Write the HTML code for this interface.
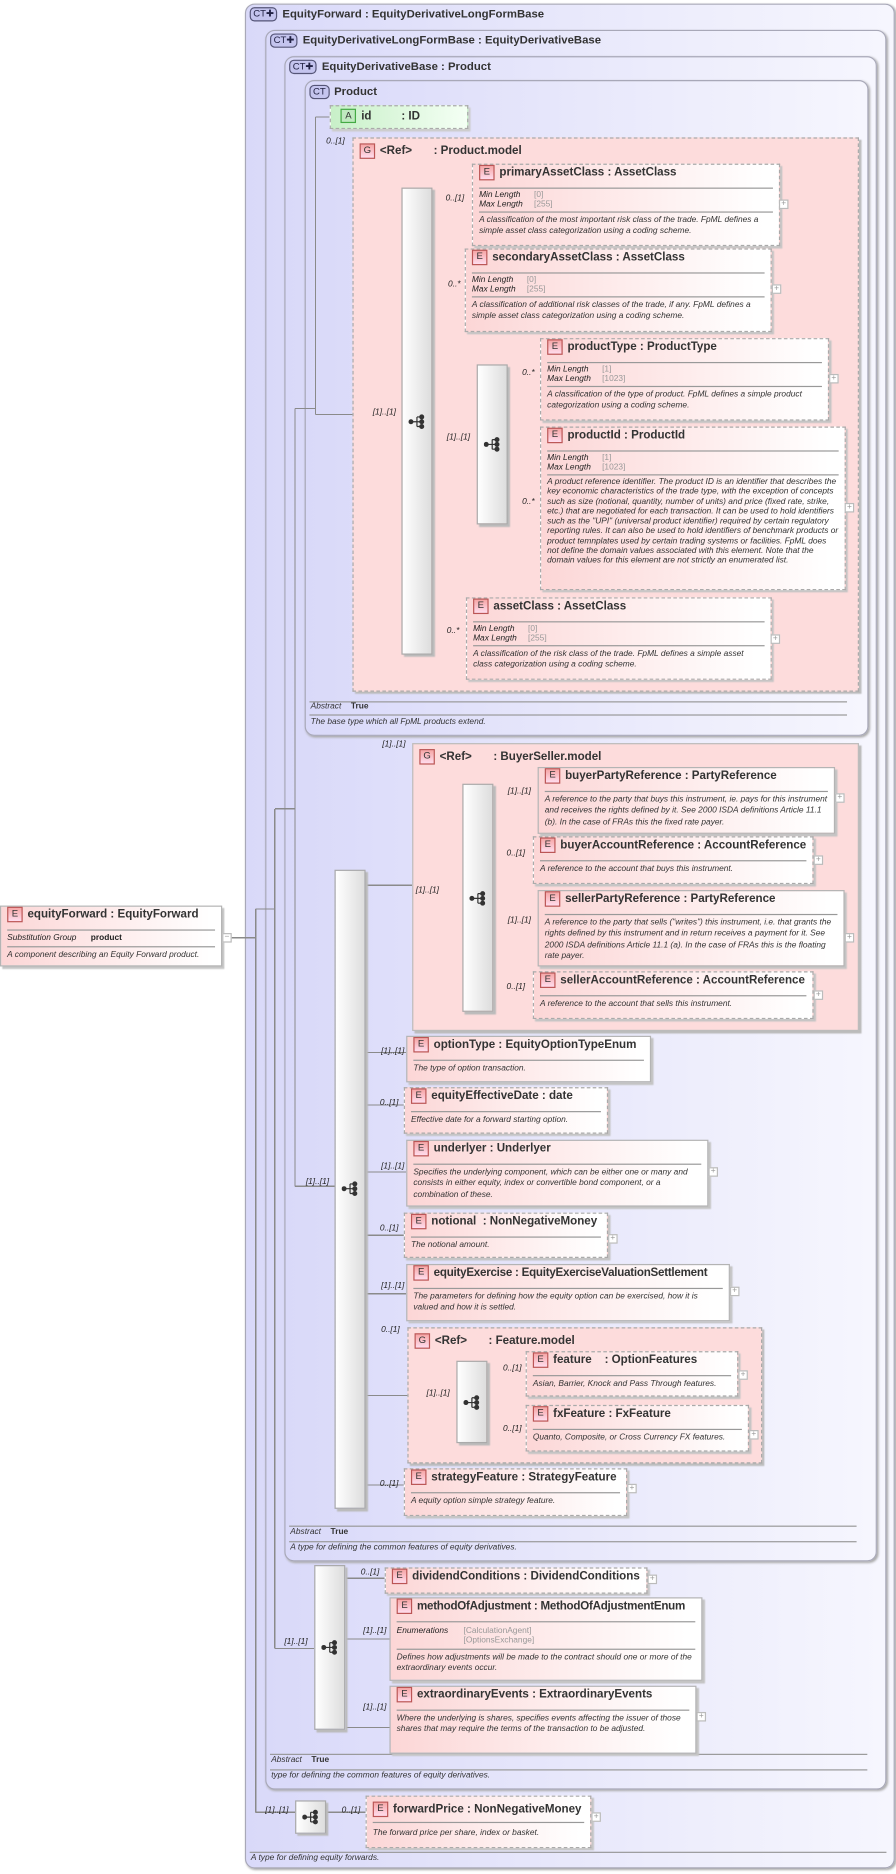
<!DOCTYPE html>
<html><head><meta charset="utf-8">
<style>
html,body{margin:0;padding:0;background:#fff;}
body{width:896px;height:1874px;overflow:hidden;position:relative;}
#s{position:absolute;left:0;top:0;width:750px;height:1569px;transform:scale(1.19467);transform-origin:0 0;font-family:"Liberation Sans",sans-serif;color:#333;}
.ct{position:absolute;box-sizing:border-box;border:1px solid #a8a8b8;border-radius:8px;background:linear-gradient(to right,#d9d9f9,#eeeefc 70%,#f6f6fe);box-shadow:1px 1px 2px #aaa;}
.cth{position:absolute;font:bold 9.5px "Liberation Sans",sans-serif;color:#333;white-space:nowrap;}
.ctb{display:inline-block;border:1px solid #557;border-radius:4px;background:#c4c4ee;font:normal 8px "Liberation Sans",sans-serif;padding:0 2px;height:10px;line-height:10px;margin-right:4px;vertical-align:middle;color:#224}
.el{position:absolute;box-sizing:border-box;border:1px solid #b4b4b4;background:linear-gradient(to right,#fcd6d6,#fff 95%);box-shadow:2px 2px 1px #c4c4c4;padding:0 5px;}
.d{border-style:dashed;border-color:#aaa;}
.hd{height:19px;line-height:19px;font:bold 9.7px "Liberation Sans",sans-serif;color:#333;white-space:nowrap;}
.E{display:inline-block;width:11px;height:11px;line-height:11px;border:1px solid #b55;background:linear-gradient(#f6a6a6,#fde);font:normal 8px "Liberation Sans",sans-serif;text-align:center;margin-right:4px;vertical-align:middle;color:#333}
.hr{border-top:1px solid #999;}
.fc{font:italic 7px "Liberation Sans",sans-serif;line-height:8px;padding:2px 0 1px;color:#222;white-space:nowrap}
.fc span{display:inline-block;width:46px}
.fc i{font-style:normal;color:#999}
.ds{font:italic 7px "Liberation Sans",sans-serif;line-height:9.4px;padding:2px 0;color:#333}
.grp{position:absolute;box-sizing:border-box;border:1px dashed #aaa;background:#fddcdc;box-shadow:2px 2px 1px #bbb;}
.gh{position:absolute;left:5px;top:4px;font:bold 9.7px "Liberation Sans",sans-serif;white-space:nowrap}
.seq{position:absolute;box-sizing:border-box;border:1px solid #aaa;background:linear-gradient(to right,#fff,#ddd);box-shadow:2px 2px 1px #bbb;}
.seq svg{position:absolute;left:50%;top:50%;margin-left:-7px;margin-top:-7px}
.lb{position:absolute;font:italic 7px "Liberation Sans",sans-serif;color:#222;white-space:nowrap}
.pl{position:absolute;width:6px;height:6px;border:1px solid #bbb;background:#fff;font:7px/6px "Liberation Sans",sans-serif;color:#999;text-align:center}
.ab{position:absolute;font:italic 7px "Liberation Sans",sans-serif;white-space:nowrap}
.ab b{font-style:normal;margin-left:8px}
.hl{position:absolute;border-top:1px solid #999;height:0}
</style></head><body><div id="s">

<div class="ct" style="left:205px;top:3px;width:544px;height:1561px"></div>
<div class="cth" style="left:209px;top:6px"><span class="ctb">CT✚</span>EquityForward : EquityDerivativeLongFormBase</div>
<div class="ct" style="left:222px;top:25px;width:520px;height:1473px"></div>
<div class="cth" style="left:226px;top:28px"><span class="ctb">CT✚</span>EquityDerivativeLongFormBase : EquityDerivativeBase</div>
<div class="ct" style="left:238px;top:47px;width:496px;height:1260px"></div>
<div class="cth" style="left:242px;top:50px"><span class="ctb">CT✚</span>EquityDerivativeBase : Product</div>
<div class="ct" style="left:255px;top:67px;width:472px;height:549px"></div>
<div class="cth" style="left:259px;top:71px"><span class="ctb">CT</span>Product</div>

<div class="hl" style="left:259px;top:587px;width:450px"></div>
<div class="ab" style="left:260px;top:588px">Abstract<b>True</b></div>
<div class="hl" style="left:259px;top:598px;width:450px"></div>
<div class="ab" style="left:260px;top:601px">The base type which all FpML products extend.</div>

<div class="hl" style="left:242px;top:1277px;width:475px"></div>
<div class="ab" style="left:243px;top:1279px">Abstract<b>True</b></div>
<div class="hl" style="left:242px;top:1290px;width:475px"></div>
<div class="ab" style="left:243px;top:1292px">A type for defining the common features of equity derivatives.</div>

<div class="hl" style="left:226px;top:1468px;width:500px"></div>
<div class="ab" style="left:227px;top:1470px">Abstract<b>True</b></div>
<div class="hl" style="left:226px;top:1481px;width:500px"></div>
<div class="ab" style="left:227px;top:1483px">type for defining the common features of equity derivatives.</div>

<div class="hl" style="left:209px;top:1550px;width:533px"></div>
<div class="ab" style="left:210px;top:1552px">A type for defining equity forwards.</div>

<svg style="position:absolute;left:0;top:0" width="750" height="1569"><g stroke="#8a8a8a" stroke-width="1" fill="none" shape-rendering="crispEdges">
<path d="M192 785H214M214 761V1517M214 761H230M230 677V1380M230 677H247M247 342V993M247 342H264M264 98V347M264 98H276M264 347H336"/>
<path d="M361 170H395M361 241H389M361 372H399M361 534H390M424 316H452M424 424H452"/>
<path d="M306 741H345M345 750H387M412 666H450M412 716H446M412 776H450M412 829H446"/>
<path d="M247 993H280M306 881H340M306 925H338M306 981H340M306 1034H338M306 1083H340M306 1168H341M306 1243H338"/>
<path d="M341 1175H382M407 1150H440M407 1200H440"/>
<path d="M230 1380H263M289 1321H322M289 1372H326M289 1446H326"/>
<path d="M214 1517H247M272 1517H306"/>
</g></svg>

<div class="el" style="left:0;top:758px;width:186px;height:51px">
<div class="hd"><span class="E">E</span>equityForward : EquityForward</div><div class="hr"></div>
<div class="fc" style="padding:3px 0 2px"><span style="width:70px">Substitution Group</span><b style="font-style:normal">product</b></div><div class="hr"></div>
<div class="ds">A component describing an Equity Forward product.</div></div>
<div class="pl" style="left:186px;top:781px">−</div>

<div style="position:absolute;left:276px;top:88px;width:116px;height:20px;box-sizing:border-box;border:1px dashed #aaa;background:linear-gradient(to right,#c8f0c8,#f4fff4);box-shadow:2px 2px 1px #ccc;font:bold 9.7px 'Liberation Sans',sans-serif;line-height:18px;padding-left:8px">
<span style="display:inline-block;border:1px solid #4a4;background:#bfe9bf;font:normal 8px 'Liberation Sans';padding:0 3px;line-height:10px;vertical-align:middle;margin-right:4px">A</span>id<span style="margin-left:25px">: ID</span></div>

<div class="lb" style="left:273px;top:115px">0..[1]</div>
<div class="grp" style="left:295px;top:115px;width:424px;height:464px"><div class="gh"><span class="E">G</span>&lt;Ref&gt;<span style="margin-left:18px">: Product.model</span></div></div>
<div class="seq" style="left:336px;top:157px;width:26px;height:391px"><svg width="14" height="14"><g fill="#333" stroke="#333"><circle cx="2" cy="7" r="1.6"/><path d="M2 7H7M7 3V11M7 3H11M7 7H11M7 11H11" fill="none"/><circle cx="11" cy="3" r="1.6"/><circle cx="11" cy="7" r="1.6"/><circle cx="11" cy="11" r="1.6"/></g></svg></div>
<div class="lb" style="left:312px;top:342px">[1]..[1]</div>

<div class="lb" style="left:373px;top:163px">0..[1]</div>
<div class="el d" style="left:395px;top:137px;width:258px;height:69px"><div class="hd"><span class="E">E</span>primaryAssetClass : AssetClass</div><div class="hr"></div>
<div class="fc"><span>Min Length</span><i>[0]</i><br><span>Max Length</span><i>[255]</i></div><div class="hr"></div>
<div class="ds">A classification of the most important risk class of the trade. FpML defines a simple asset class categorization using a coding scheme.</div></div>
<div class="pl" style="left:652px;top:167px">+</div>

<div class="lb" style="left:375px;top:235px">0..*</div>
<div class="el d" style="left:389px;top:208px;width:257px;height:70px"><div class="hd"><span class="E">E</span>secondaryAssetClass : AssetClass</div><div class="hr"></div>
<div class="fc"><span>Min Length</span><i>[0]</i><br><span>Max Length</span><i>[255]</i></div><div class="hr"></div>
<div class="ds">A classification of additional risk classes of the trade, if any. FpML defines a simple asset class categorization using a coding scheme.</div></div>
<div class="pl" style="left:646px;top:238px">+</div>

<div class="seq" style="left:399px;top:305px;width:26px;height:134px"><svg width="14" height="14"><g fill="#333" stroke="#333"><circle cx="2" cy="7" r="1.6"/><path d="M2 7H7M7 3V11M7 3H11M7 7H11M7 11H11" fill="none"/><circle cx="11" cy="3" r="1.6"/><circle cx="11" cy="7" r="1.6"/><circle cx="11" cy="11" r="1.6"/></g></svg></div>
<div class="lb" style="left:374px;top:363px">[1]..[1]</div>

<div class="lb" style="left:437px;top:309px">0..*</div>
<div class="el d" style="left:452px;top:283px;width:242px;height:69px"><div class="hd"><span class="E">E</span>productType : ProductType</div><div class="hr"></div>
<div class="fc"><span>Min Length</span><i>[1]</i><br><span>Max Length</span><i>[1023]</i></div><div class="hr"></div>
<div class="ds">A classification of the type of product. FpML defines a simple product categorization using a coding scheme.</div></div>
<div class="pl" style="left:694px;top:313px">+</div>

<div class="lb" style="left:437px;top:417px">0..*</div>
<div class="el d" style="left:452px;top:357px;width:256px;height:137px"><div class="hd"><span class="E">E</span>productId : ProductId</div><div class="hr"></div>
<div class="fc"><span>Min Length</span><i>[1]</i><br><span>Max Length</span><i>[1023]</i></div><div class="hr"></div>
<div class="ds" style="line-height:8.3px">A product reference identifier. The product ID is an identifier that describes the key economic characteristics of the trade type, with the exception of concepts such as size (notional, quantity, number of units) and price (fixed rate, strike, etc.) that are negotiated for each transaction. It can be used to hold identifiers such as the "UPI" (universal product identifier) required by certain regulatory reporting rules. It can also be used to hold identifiers of benchmark products or product temnplates used by certain trading systems or facilities. FpML does not define the domain values associated with this element. Note that the domain values for this element are not strictly an enumerated list.</div></div>
<div class="pl" style="left:707px;top:421px">+</div>

<div class="lb" style="left:374px;top:525px">0..*</div>
<div class="el d" style="left:390px;top:500px;width:256px;height:69px"><div class="hd"><span class="E">E</span>assetClass : AssetClass</div><div class="hr"></div>
<div class="fc"><span>Min Length</span><i>[0]</i><br><span>Max Length</span><i>[255]</i></div><div class="hr"></div>
<div class="ds">A classification of the risk class of the trade. FpML defines a simple asset class categorization using a coding scheme.</div></div>
<div class="pl" style="left:645px;top:531px">+</div>

<div class="lb" style="left:320px;top:620px">[1]..[1]</div>
<div class="grp" style="left:345px;top:622px;width:374px;height:241px;border-style:solid;border-color:#bbb"><div class="gh"><span class="E">G</span>&lt;Ref&gt;<span style="margin-left:18px">: BuyerSeller.model</span></div></div>
<div class="seq" style="left:387px;top:656px;width:26px;height:191px"><svg width="14" height="14"><g fill="#333" stroke="#333"><circle cx="2" cy="7" r="1.6"/><path d="M2 7H7M7 3V11M7 3H11M7 7H11M7 11H11" fill="none"/><circle cx="11" cy="3" r="1.6"/><circle cx="11" cy="7" r="1.6"/><circle cx="11" cy="11" r="1.6"/></g></svg></div>
<div class="lb" style="left:348px;top:742px">[1]..[1]</div>

<div class="lb" style="left:425px;top:659px">[1]..[1]</div>
<div class="el" style="left:450px;top:642px;width:249px;height:56px"><div class="hd"><span class="E">E</span>buyerPartyReference : PartyReference</div><div class="hr"></div>
<div class="ds">A reference to the party that buys this instrument, ie. pays for this instrument and receives the rights defined by it. See 2000 ISDA definitions Article 11.1 (b). In the case of FRAs this the fixed rate payer.</div></div>
<div class="pl" style="left:699px;top:664px">+</div>

<div class="lb" style="left:424px;top:711px">0..[1]</div>
<div class="el d" style="left:446px;top:700px;width:235px;height:40px"><div class="hd"><span class="E">E</span>buyerAccountReference : AccountReference</div><div class="hr"></div>
<div class="ds">A reference to the account that buys this instrument.</div></div>
<div class="pl" style="left:681px;top:716px">+</div>

<div class="lb" style="left:425px;top:767px">[1]..[1]</div>
<div class="el" style="left:450px;top:745px;width:257px;height:64px"><div class="hd"><span class="E">E</span>sellerPartyReference : PartyReference</div><div class="hr"></div>
<div class="ds">A reference to the party that sells ("writes") this instrument, i.e. that grants the rights defined by this instrument and in return receives a payment for it. See 2000 ISDA definitions Article 11.1 (a). In the case of FRAs this is the floating rate payer.</div></div>
<div class="pl" style="left:707px;top:781px">+</div>

<div class="lb" style="left:424px;top:823px">0..[1]</div>
<div class="el d" style="left:446px;top:813px;width:235px;height:40px"><div class="hd"><span class="E">E</span>sellerAccountReference : AccountReference</div><div class="hr"></div>
<div class="ds">A reference to the account that sells this instrument.</div></div>
<div class="pl" style="left:681px;top:829px">+</div>

<div class="seq" style="left:280px;top:728px;width:26px;height:535px"><svg width="14" height="14" style="top:266px"><g fill="#333" stroke="#333"><circle cx="2" cy="7" r="1.6"/><path d="M2 7H7M7 3V11M7 3H11M7 7H11M7 11H11" fill="none"/><circle cx="11" cy="3" r="1.6"/><circle cx="11" cy="7" r="1.6"/><circle cx="11" cy="11" r="1.6"/></g></svg></div>
<div class="lb" style="left:256px;top:986px">[1]..[1]</div>

<div class="lb" style="left:319px;top:877px">[1]..[1]</div>
<div class="el" style="left:340px;top:867px;width:205px;height:39px"><div class="hd"><span class="E">E</span>optionType : EquityOptionTypeEnum</div><div class="hr"></div>
<div class="ds">The type of option transaction.</div></div>

<div class="lb" style="left:318px;top:920px">0..[1]</div>
<div class="el d" style="left:338px;top:910px;width:171px;height:39px"><div class="hd"><span class="E">E</span>equityEffectiveDate : date</div><div class="hr"></div>
<div class="ds">Effective date for a forward starting option.</div></div>

<div class="lb" style="left:319px;top:973px">[1]..[1]</div>
<div class="el" style="left:340px;top:954px;width:253px;height:56px"><div class="hd"><span class="E">E</span>underlyer : Underlyer</div><div class="hr"></div>
<div class="ds">Specifies the underlying component, which can be either one or many and consists in either equity, index or convertible bond component, or a combination of these.</div></div>
<div class="pl" style="left:593px;top:977px">+</div>

<div class="lb" style="left:318px;top:1025px">0..[1]</div>
<div class="el d" style="left:338px;top:1015px;width:171px;height:38px"><div class="hd"><span class="E">E</span>notional&nbsp; : NonNegativeMoney</div><div class="hr"></div>
<div class="ds">The notional amount.</div></div>
<div class="pl" style="left:509px;top:1033px">+</div>

<div class="lb" style="left:319px;top:1073px">[1]..[1]</div>
<div class="el" style="left:340px;top:1058px;width:271px;height:48px"><div class="hd" style="letter-spacing:-0.2px"><span class="E">E</span>equityExercise : EquityExerciseValuationSettlement</div><div class="hr"></div>
<div class="ds">The parameters for defining how the equity option can be exercised, how it is valued and how it is settled.</div></div>
<div class="pl" style="left:611px;top:1077px">+</div>

<div class="lb" style="left:319px;top:1110px">0..[1]</div>
<div class="grp" style="left:341px;top:1111px;width:297px;height:114px"><div class="gh"><span class="E">G</span>&lt;Ref&gt;<span style="margin-left:18px">: Feature.model</span></div></div>
<div class="seq" style="left:382px;top:1139px;width:26px;height:69px"><svg width="14" height="14"><g fill="#333" stroke="#333"><circle cx="2" cy="7" r="1.6"/><path d="M2 7H7M7 3V11M7 3H11M7 7H11M7 11H11" fill="none"/><circle cx="11" cy="3" r="1.6"/><circle cx="11" cy="7" r="1.6"/><circle cx="11" cy="11" r="1.6"/></g></svg></div>
<div class="lb" style="left:357px;top:1163px">[1]..[1]</div>

<div class="lb" style="left:421px;top:1142px">0..[1]</div>
<div class="el d" style="left:440px;top:1131px;width:178px;height:38px"><div class="hd"><span class="E">E</span>feature&nbsp;&nbsp;&nbsp; : OptionFeatures</div><div class="hr"></div>
<div class="ds">Asian, Barrier, Knock and Pass Through features.</div></div>
<div class="pl" style="left:618px;top:1147px">+</div>

<div class="lb" style="left:421px;top:1193px">0..[1]</div>
<div class="el d" style="left:440px;top:1176px;width:187px;height:39px"><div class="hd"><span class="E">E</span>fxFeature : FxFeature</div><div class="hr"></div>
<div class="ds">Quanto, Composite, or Cross Currency FX features.</div></div>
<div class="pl" style="left:627px;top:1197px">+</div>

<div class="lb" style="left:318px;top:1239px">0..[1]</div>
<div class="el d" style="left:338px;top:1229px;width:187px;height:40px"><div class="hd"><span class="E">E</span>strategyFeature : StrategyFeature</div><div class="hr"></div>
<div class="ds">A equity option simple strategy feature.</div></div>
<div class="pl" style="left:525px;top:1242px">+</div>

<div class="seq" style="left:263px;top:1310px;width:26px;height:138px"><svg width="14" height="14"><g fill="#333" stroke="#333"><circle cx="2" cy="7" r="1.6"/><path d="M2 7H7M7 3V11M7 3H11M7 7H11M7 11H11" fill="none"/><circle cx="11" cy="3" r="1.6"/><circle cx="11" cy="7" r="1.6"/><circle cx="11" cy="11" r="1.6"/></g></svg></div>
<div class="lb" style="left:238px;top:1371px">[1]..[1]</div>

<div class="lb" style="left:302px;top:1313px">0..[1]</div>
<div class="el d" style="left:322px;top:1312px;width:220px;height:22px"><div class="hd"><span class="E">E</span>dividendConditions : DividendConditions</div></div>
<div class="pl" style="left:542px;top:1318px">+</div>

<div class="lb" style="left:304px;top:1362px">[1]..[1]</div>
<div class="el" style="left:326px;top:1337px;width:262px;height:70px"><div class="hd" style="letter-spacing:-0.2px"><span class="E">E</span>methodOfAdjustment : MethodOfAdjustmentEnum</div><div class="hr"></div>
<div class="fc" style="padding:4px 0 2px"><span style="width:56px">Enumerations</span><i>[CalculationAgent]</i><br><span style="width:56px"></span><i>[OptionsExchange]</i></div><div class="hr"></div>
<div class="ds">Defines how adjustments will be made to the contract should one or more of the extraordinary events occur.</div></div>

<div class="lb" style="left:304px;top:1426px">[1]..[1]</div>
<div class="el" style="left:326px;top:1411px;width:257px;height:57px"><div class="hd"><span class="E">E</span>extraordinaryEvents : ExtraordinaryEvents</div><div class="hr"></div>
<div class="ds">Where the underlying is shares, specifies events affecting the issuer of those shares that may require the terms of the transaction to be adjusted.</div></div>
<div class="pl" style="left:583px;top:1433px">+</div>

<div class="seq" style="left:247px;top:1507px;width:26px;height:28px"><svg width="14" height="14"><g fill="#333" stroke="#333"><circle cx="2" cy="7" r="1.6"/><path d="M2 7H7M7 3V11M7 3H11M7 7H11M7 11H11" fill="none"/><circle cx="11" cy="3" r="1.6"/><circle cx="11" cy="7" r="1.6"/><circle cx="11" cy="11" r="1.6"/></g></svg></div>
<div class="lb" style="left:222px;top:1512px">[1]..[1]</div>
<div class="lb" style="left:286px;top:1512px">0..[1]</div>
<div class="el d" style="left:306px;top:1503px;width:189px;height:44px"><div class="hd" style="height:21px;line-height:21px"><span class="E">E</span>forwardPrice : NonNegativeMoney</div><div class="hr"></div>
<div class="ds" style="padding-top:4px">The forward price per share, index or basket.</div></div>
<div class="pl" style="left:495px;top:1517px">+</div>

</div></body></html>
